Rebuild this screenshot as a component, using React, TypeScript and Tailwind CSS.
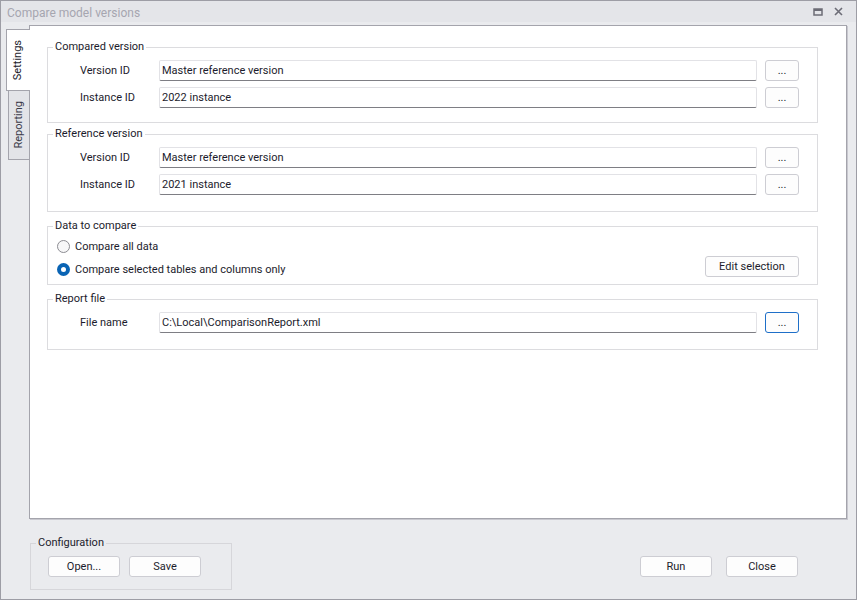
import React from 'react';

const ink = 'text-[#1c1c2c]';

const Btn: React.FC<{ label: string; className?: string; focused?: boolean }> = ({ label, className = '', focused }) => (
  <button
    className={`h-[21px] shrink-0 rounded-[3px] border bg-[#fdfdfd] text-[11px] leading-none ${ink} ${
      focused ? 'border-[#1e6fc8]' : 'border-[#cdcdd3]'
    } ${className}`}
  >
    {label}
  </button>
);

const Field: React.FC<{ label: string; value: string; focused?: boolean }> = ({ label, value, focused }) => (
  <div className="mt-[5px] flex h-[22px] items-center">
    <span className={`ml-[32px] w-[79px] pt-[2px] text-[11px] ${ink}`}>{label}</span>
    <div className="flex h-[21px] w-[598px] items-center rounded-[2px] border border-[#e2e2e6] border-b-[#7e7e84] bg-white px-[2px]">
      <span className={`pt-[2px] text-[11px] ${ink}`}>{value}</span>
    </div>
    <Btn label="..." focused={focused} className="ml-[8px] w-[34px]" />
  </div>
);

const Group: React.FC<{ title: string; className?: string; children: React.ReactNode }> = ({ title, className = '', children }) => (
  <fieldset className={`w-[771px] border border-[#dcdcdf] ${className}`}>
    <legend className={`ml-[5px] px-[2px] text-[11px] leading-[14px] ${ink}`}>{title}</legend>
    {children}
  </fieldset>
);

const Radio: React.FC<{ checked?: boolean }> = ({ checked }) =>
  checked ? (
    <span className="flex h-[13px] w-[13px] items-center justify-center rounded-full bg-[#0a64b4]">
      <span className="h-[5px] w-[5px] rounded-full bg-white" />
    </span>
  ) : (
    <span className="h-[13px] w-[13px] rounded-full border border-[#8c8c92] bg-[#f7f7f8]" />
  );

export default function App() {
  return (
    <div className="flex h-[600px] w-[857px] flex-col border border-[#9d9da5] bg-[#eaebee] font-['Roboto',sans-serif]">
      {/* title bar */}
      <div className="flex h-[21px] shrink-0 items-center bg-[#e4e5e9] pl-[6px] pr-[13px]">
        <span className="pt-[2px] text-[12px] text-[#a6a6b0]">Compare model versions</span>
        <div className="ml-auto flex items-center gap-[11px]">
          <svg width="10" height="8" viewBox="0 0 10 8">
            <rect x="1" y="1" width="8" height="6" fill="none" stroke="#6c6c76" strokeWidth="1.5" />
            <rect x="1" y="1" width="8" height="2" fill="#6c6c76" />
          </svg>
          <svg width="9" height="9" viewBox="0 0 9 9">
            <path d="M1 1 L8 8 M8 1 L1 8" stroke="#6c6c76" strokeWidth="1.6" />
          </svg>
        </div>
      </div>

      {/* tabs + page */}
      <div className="flex pt-[3px]">
        <div className="flex w-[28px] shrink-0 flex-col pt-[4px]">
          <div className="relative z-10 ml-[5px] flex h-[62px] w-[24px] items-center justify-center border-y border-l border-[#a4a4ac] bg-white">
            <span className={`rotate-180 text-[11px] [writing-mode:vertical-rl] ${ink}`}>Settings</span>
          </div>
          <div className="ml-[7px] -mt-px flex h-[70px] w-[21px] items-center justify-center border-y border-l border-[#a4a4ac] bg-[#e3e4e8]">
            <span className="rotate-180 text-[11px] text-[#3a3a48] [writing-mode:vertical-rl]">Reporting</span>
          </div>
        </div>

        <div className="flex h-[494px] w-[818px] shrink-0 flex-col border border-[#a4a4ac] bg-white pl-[17px] pt-[14px] shadow-[1px_1px_0_#c8c8cf]">
          <Group title="Compared version" className="pb-[14px]">
            <Field label="Version ID" value="Master reference version" />
            <Field label="Instance ID" value="2022 instance" />
          </Group>

          <Group title="Reference version" className="mt-[4px] pb-[16px]">
            <Field label="Version ID" value="Master reference version" />
            <Field label="Instance ID" value="2021 instance" />
          </Group>

          <Group title="Data to compare" className="mt-[7px] pb-[6px]">
            <div className="mt-[4px] flex h-[18px] items-center pl-[9px]">
              <Radio />
              <span className={`ml-[5px] pt-[2px] text-[11px] ${ink}`}>Compare all data</span>
            </div>
            <div className="mt-[1px] flex h-[22px] items-start pl-[9px] pr-[18px]">
              <div className="flex h-[18px] items-center self-end">
                <Radio checked />
                <span className={`ml-[5px] pt-[2px] text-[11px] ${ink}`}>Compare selected tables and columns only</span>
              </div>
              <Btn label="Edit selection" className="ml-auto w-[94px]" />
            </div>
          </Group>

          <Group title="Report file" className="mt-[7px] pb-[16px]">
            <Field label="File name" value="C:\Local\ComparisonReport.xml" focused />
          </Group>
        </div>
      </div>

      {/* footer */}
      <div className="flex items-start pt-[17px]">
        <fieldset className="ml-[29px] w-[202px] border border-[#d6d6da] pb-[12px]">
          <legend className={`ml-[5px] px-[2px] text-[11px] leading-[14px] ${ink}`}>Configuration</legend>
          <div className="mt-[6px] flex gap-[9px] pl-[17px]">
            <Btn label="Open..." className="w-[72px]" />
            <Btn label="Save" className="w-[72px]" />
          </div>
        </fieldset>
        <div className="ml-auto mr-[58px] mt-[20px] flex gap-[14px]">
          <Btn label="Run" className="w-[72px]" />
          <Btn label="Close" className="w-[72px]" />
        </div>
      </div>
    </div>
  );
}
